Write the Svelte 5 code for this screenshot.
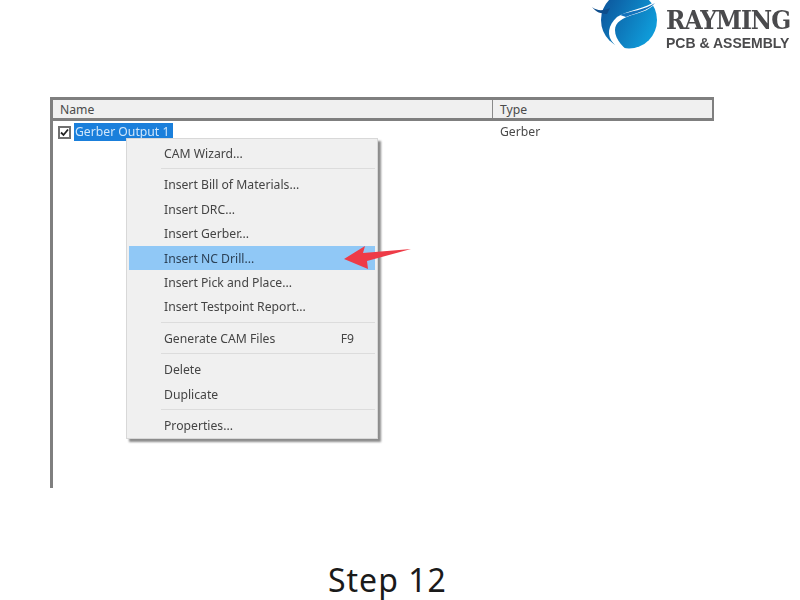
<script>
  const menu = [
    [{ label: "CAM Wizard..." }],
    [
      { label: "Insert Bill of Materials..." },
      { label: "Insert DRC..." },
      { label: "Insert Gerber..." },
      { label: "Insert NC Drill...", active: true },
      { label: "Insert Pick and Place..." },
      { label: "Insert Testpoint Report..." },
    ],
    [{ label: "Generate CAM Files", key: "F9" }],
    [{ label: "Delete" }, { label: "Duplicate" }],
    [{ label: "Properties..." }],
  ];
</script>

<div class="page">
  <header class="top">
    <div class="logo">
      <svg class="mark" width="70" height="56" viewBox="0 0 70 56">
        <defs>
          <linearGradient id="ball" x1="0" y1="0" x2="1" y2="0.5">
            <stop offset="0" stop-color="#0c4f96" />
            <stop offset="1" stop-color="#0f9ad8" />
          </linearGradient>
        </defs>
        <ellipse cx="39" cy="20" rx="28" ry="28.5" fill="url(#ball)" />
        <path d="M67 0C56 9 37 10 27 17C18 25 16 36 24 44C29 49 35 53 43 55C34 48 25 40 25 30C25 22 33 18 42 15C52 12 62 10 67 0Z" fill="#fff" />
        <path d="M30 15C40 11 55 10 65 3C58 11 45 13 36 17Z" fill="#1272bc" />
        <path d="M2 7C7 11 13 11 20 8L17 14C11 14 6 12 2 7Z" fill="#0d4d8c" />
      </svg>
      <div class="brand">
        <span class="name">RAYMING</span>
        <span class="sub">PCB &amp; ASSEMBLY</span>
      </div>
    </div>
  </header>

  <main class="panel">
    <div class="head">
      <div class="col-name">Name</div>
      <div class="col-type">Type</div>
    </div>
    <div class="row">
      <div class="col-name cell">
        <span class="check">
          <svg width="9" height="9" viewBox="0 0 9 9">
            <path d="M1 4.5L3.5 7L8 1.5" fill="none" stroke="#222" stroke-width="1.8" />
          </svg>
        </span>
        <span class="selected">Gerber Output 1</span>
      </div>
      <div class="col-type">Gerber</div>
    </div>

    <div class="menu">
      {#each menu as group, g}
        {#if g > 0}<div class="sep"></div>{/if}
        {#each group as item}
          <div class="item" class:active={item.active}>
            <span>{item.label}</span>
            {#if item.key}<span class="key">{item.key}</span>{/if}
          </div>
        {/each}
      {/each}
    </div>

    <svg class="arrow" width="70" height="26" viewBox="0 0 70 26">
      <path d="M1 15L22 2L20 9L68 5L24 17L25 25Z" fill="#ee3b47" />
    </svg>
  </main>

  <footer class="caption">Step 12</footer>
</div>

<style>
  :global(body) {
    background: #fff;
  }

  .page {
    width: 800px;
    height: 600px;
    display: flex;
    flex-direction: column;
    overflow: hidden;
    font-family: "Noto Sans", "Open Sans", sans-serif;
  }

  .top {
    height: 97px;
    display: flex;
    justify-content: flex-end;
    align-items: flex-start;
  }

  .logo {
    display: flex;
    margin-right: 9px;
    gap: 6px;
  }

  .mark {
    display: block;
  }

  .brand {
    width: 125px;
    display: flex;
    flex-direction: column;
    color: #4a4a4c;
    padding-top: 4px;
    white-space: nowrap;
  }

  .name {
    font-family: "DejaVu Serif Condensed", "DejaVu Serif", serif;
    font-weight: 700;
    font-size: 26px;
    line-height: 32px;
    letter-spacing: -1px;
    filter: blur(0.3px);
  }

  .sub {
    font-family: "Liberation Sans", sans-serif;
    font-weight: 700;
    font-size: 14px;
    line-height: 14px;
    filter: blur(0.3px);
  }

  .panel {
    position: relative;
    margin-left: 50px;
    width: 664px;
    height: 391px;
    border-left: 3px solid #7f7f7f;
    box-sizing: border-box;
    font-size: 12.2px;
    color: #4a4a4a;
    filter: blur(0.4px);
  }

  .head {
    display: flex;
    height: 24px;
    box-sizing: border-box;
    border-top: 3px solid #7f7f7f;
    border-bottom: 3px solid #7f7f7f;
    border-right: 2px solid #7f7f7f;
    background: #f0f0f0;
    line-height: 19px;
  }

  .head .col-name {
    border-right: 1px solid #8a8a8a;
  }

  .col-name {
    width: 440px;
    padding-left: 7px;
    box-sizing: border-box;
  }

  .col-type {
    padding-left: 7px;
  }

  .row {
    display: flex;
    margin-top: 2px;
    height: 18px;
    line-height: 18px;
  }

  .cell {
    display: flex;
    align-items: center;
    padding-left: 5px;
    gap: 3px;
  }

  .check {
    width: 13px;
    height: 13px;
    box-sizing: border-box;
    border: 2px solid #707070;
    background: #fff;
    display: flex;
    align-items: center;
    justify-content: center;
  }

  .selected {
    background: #1a7fdb;
    color: #cfe6fb;
    padding: 0 4px 0 1px;
    height: 18px;
  }

  .menu {
    position: absolute;
    left: 73px;
    top: 41px;
    width: 252px;
    height: 301px;
    box-sizing: border-box;
    padding: 2px 2px;
    background: #f0f0f0;
    border: 1px solid #d8d8d8;
    box-shadow: 3px 3px 2px #8c8c8c;
    color: #444;
  }

  .item {
    height: 24.4px;
    line-height: 25px;
    padding: 0 21px 0 35px;
    display: flex;
    justify-content: space-between;
  }

  .item.active {
    background: #90c8f6;
    color: #2c4156;
  }

  .sep {
    height: 1px;
    background: #dcdcdc;
    margin: 3px 0 3px 32px;
  }

  .arrow {
    position: absolute;
    left: 290px;
    top: 147px;
  }

  .caption {
    margin-top: 72px;
    padding-left: 328px;
    font-size: 32px;
    line-height: 40px;
    letter-spacing: 1px;
    color: #1a1a1a;
  }
</style>
